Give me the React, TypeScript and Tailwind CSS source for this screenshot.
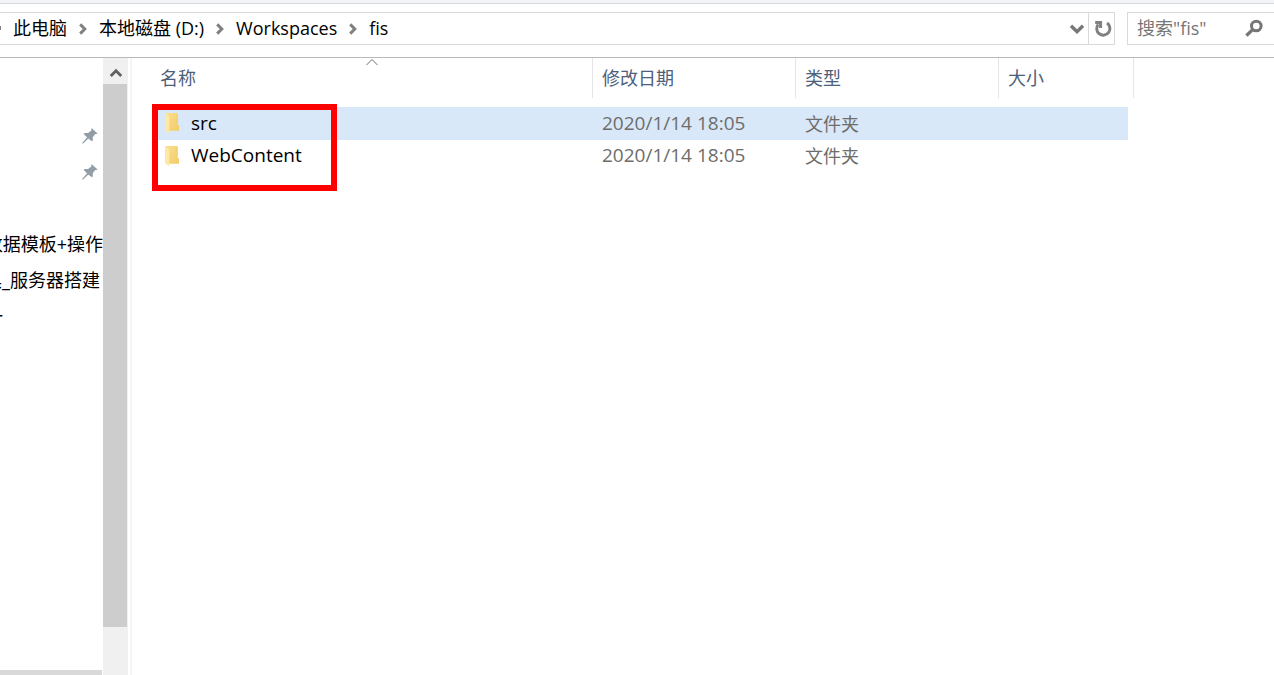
import type { ReactNode } from 'react';

type Entry = { name: string; modified: string; type: string; selected?: boolean };

const path = ['此电脑', '本地磁盘 (D:)', 'Workspaces', 'fis'];

const entries: Entry[] = [
  { name: 'src', modified: '2020/1/14 18:05', type: '文件夹', selected: true },
  { name: 'WebContent', modified: '2020/1/14 18:05', type: '文件夹' },
];

const PinIcon = () => (
  <svg width="16" height="16" viewBox="0 0 16 16" fill="#929da5" aria-hidden="true">
    <path d="M9.7 0.3 15.6 5.5 14.2 6.1 13.3 6 10.7 9.2 10.9 12.2 9.8 13.3 6.3 10.4 1.2 15.6 0.3 15.8 0.4 14.7 5.1 9.2 1.6 6.1 2.8 5 6.1 5 9.4 2.4 9.1 1.3Z" />
  </svg>
);

const FolderIcon = () => (
  <svg width="14" height="22" viewBox="0 0 14 22" aria-hidden="true">
    <defs>
      <linearGradient id="folder-back" x1="0" y1="0" x2="1" y2="1">
        <stop offset="0" stopColor="#fbdf8e" />
        <stop offset="1" stopColor="#f0cd68" />
      </linearGradient>
    </defs>
    <path d="M0.5 1H12.6V12.5L14 13.5V18.7H4Z" fill="url(#folder-back)" />
    <path d="M0 1 3.4 3.4Q4.3 4 4.3 5V20.4Q4.3 21.2 3.5 20.8L0.6 18.8Q0 18.4 0 17.6Z" fill="#ffe7a6" />
    <path d="M12.2 2V11" stroke="#e9c65f" strokeWidth="0.6" />
  </svg>
);

const Separator = () => (
  <svg width="8" height="12" viewBox="0 0 8 12" fill="none" stroke="#808080" strokeWidth="3" aria-hidden="true">
    <path d="M1.2 1.4 5.8 6 1.2 10.6" />
  </svg>
);

function SidebarItem({ children }: { children?: ReactNode }) {
  return <li className="flex h-9 items-center justify-end whitespace-nowrap">{children}</li>;
}

export default function App() {
  return (
    <div className="flex min-h-screen flex-col overflow-hidden bg-white font-['Open_Sans','Noto_Sans_CJK_SC',sans-serif] text-lg text-black">
      <div className="h-1 border-b border-[#d9dadd] bg-[#f3f4f8]" />
      <header className="flex gap-3 border-b border-[#b9b9b9] pt-2 pb-3">
        <div className="flex h-[33px] min-w-0 flex-1 border border-l-0 border-[#d9d9d9]">
          <nav aria-label="路径" className="flex flex-1 items-center overflow-hidden pb-0.5 whitespace-nowrap">
            <span className="mr-3 h-1 w-px bg-[#808080]" />
            {path.map((part, i) => (
              <span key={part} className="flex items-center">
                {i > 0 && (
                  <span className="mx-3 pt-0.5">
                    <Separator />
                  </span>
                )}
                <a href="#">{part}</a>
              </span>
            ))}
          </nav>
          <button aria-label="以前的位置" className="flex w-[23px] items-center justify-center">
            <svg width="14" height="10" viewBox="0 0 14 10" fill="none" stroke="#777" strokeWidth="3.4">
              <path d="M1 1.8 7 7.6 13 1.8" />
            </svg>
          </button>
          <button aria-label="刷新" className="flex w-[26px] items-center justify-center border-l border-[#d9d9d9] pl-0.5">
            <svg width="18" height="18" viewBox="0 0 18 18" fill="none" stroke="#808080" strokeWidth="3">
              <path d="M13 3.1A6.6 6.6 0 1 1 4.2 4.4" />
              <path d="M1.2 2.4H6.6V8" />
            </svg>
          </button>
        </div>
        <form className="flex h-[33px] w-[147px] items-center border border-r-0 border-[#d9d9d9] pr-[11px] pb-px pl-[9px]">
          <input
            aria-label="搜索"
            placeholder={'搜索"fis"'}
            className="min-w-0 flex-1 bg-transparent outline-none placeholder:text-[#767676]"
          />
          <button aria-label="搜索" type="button">
            <svg width="18" height="18" viewBox="0 0 18 18" fill="none" stroke="#757575">
              <circle cx="11.3" cy="7" r="4.8" strokeWidth="3" />
              <path d="M7.6 10.6 1.4 16.6" strokeWidth="3.4" />
            </svg>
          </button>
        </form>
      </header>

      <div className="flex flex-1">
        <aside className="flex w-[103px] flex-col justify-between overflow-hidden">
          <ul className="pt-[60px]">
            <SidebarItem><span className="mr-[5px]"><PinIcon /></span></SidebarItem>
            <SidebarItem><span className="mr-[5px]"><PinIcon /></span></SidebarItem>
            <SidebarItem />
            <SidebarItem>数据模板+操作</SidebarItem>
            <SidebarItem><span className="mr-[3px]">具_服务器搭建</span></SidebarItem>
            <SidebarItem><span className="mr-[100px]">一</span></SidebarItem>
          </ul>
          <div className="mr-px h-[5px] bg-[#d9d9d9]" />
        </aside>
        <div className="flex w-[25px] flex-col bg-[#f0f0f0] pr-px">
          <button aria-label="向上滚动" className="flex h-[26px] items-center justify-center pt-1 pl-px">
            <svg width="12" height="10" viewBox="0 0 12 10" fill="none" stroke="#606060" strokeWidth="2.8">
              <path d="M0.8 8 6 2.8 11.2 8" />
            </svg>
          </button>
          <div className="mb-12 flex-1 bg-[#cdcdcd]" />
        </div>
        <div className="ml-0.5 w-0.5 bg-[#f5f5f5]" />

        <main className="relative flex-1 pl-5">
          <table className="w-[982px] table-fixed border-separate border-spacing-0 text-left">
            <colgroup>
              <col className="w-[441px]" />
              <col className="w-[203px]" />
              <col className="w-[203px]" />
              <col className="w-[129px]" />
              <col />
            </colgroup>
            <thead className="text-[#4c607a]">
              <tr className="h-10">
                <th className="relative border-r border-[#e5e5e5] px-2 font-normal">
                  名称
                  <svg className="absolute top-0 left-1/2 -translate-x-1/2" width="13" height="8" viewBox="0 0 13 8" fill="none" stroke="#6d6d6d">
                    <path d="M1 7 6.5 1.5 12 7" />
                  </svg>
                </th>
                <th className="border-r border-[#e5e5e5] px-[9px] font-normal">修改日期</th>
                <th className="border-r border-[#e5e5e5] px-[9px] font-normal">类型</th>
                <th colSpan={2} className="border-r border-[#e5e5e5] px-[9px] font-normal">大小</th>
              </tr>
            </thead>
            <tbody className="text-[#6d6d6d]">
              <tr className="h-[9px]"><td colSpan={5} className="p-0" /></tr>
              {entries.map((e) => {
                const bg = e.selected ? 'bg-[#d9e8f8]' : 'bg-white';
                const height = e.selected ? 'h-[33px]' : 'h-8';
                return (
                  <tr key={e.name} className={height}>
                    <td className={`${bg} py-0 pr-3 pl-[13px]`}>
                      <a href="#" className="flex items-center gap-3 text-[19px] text-black">
                        <FolderIcon />
                        {e.name}
                      </a>
                    </td>
                    <td className={`${bg} px-[9px] py-0 text-[19px]`}>{e.modified}</td>
                    <td className={`${bg} px-[9px] py-0`}>{e.type}</td>
                    <td className={`${bg} p-0`} />
                    <td className="p-0" />
                  </tr>
                );
              })}
            </tbody>
          </table>
          <div className="pointer-events-none absolute top-[46px] left-5 h-[87px] w-[185px] border-6 border-[#ff0000]" />
        </main>
      </div>
    </div>
  );
}
